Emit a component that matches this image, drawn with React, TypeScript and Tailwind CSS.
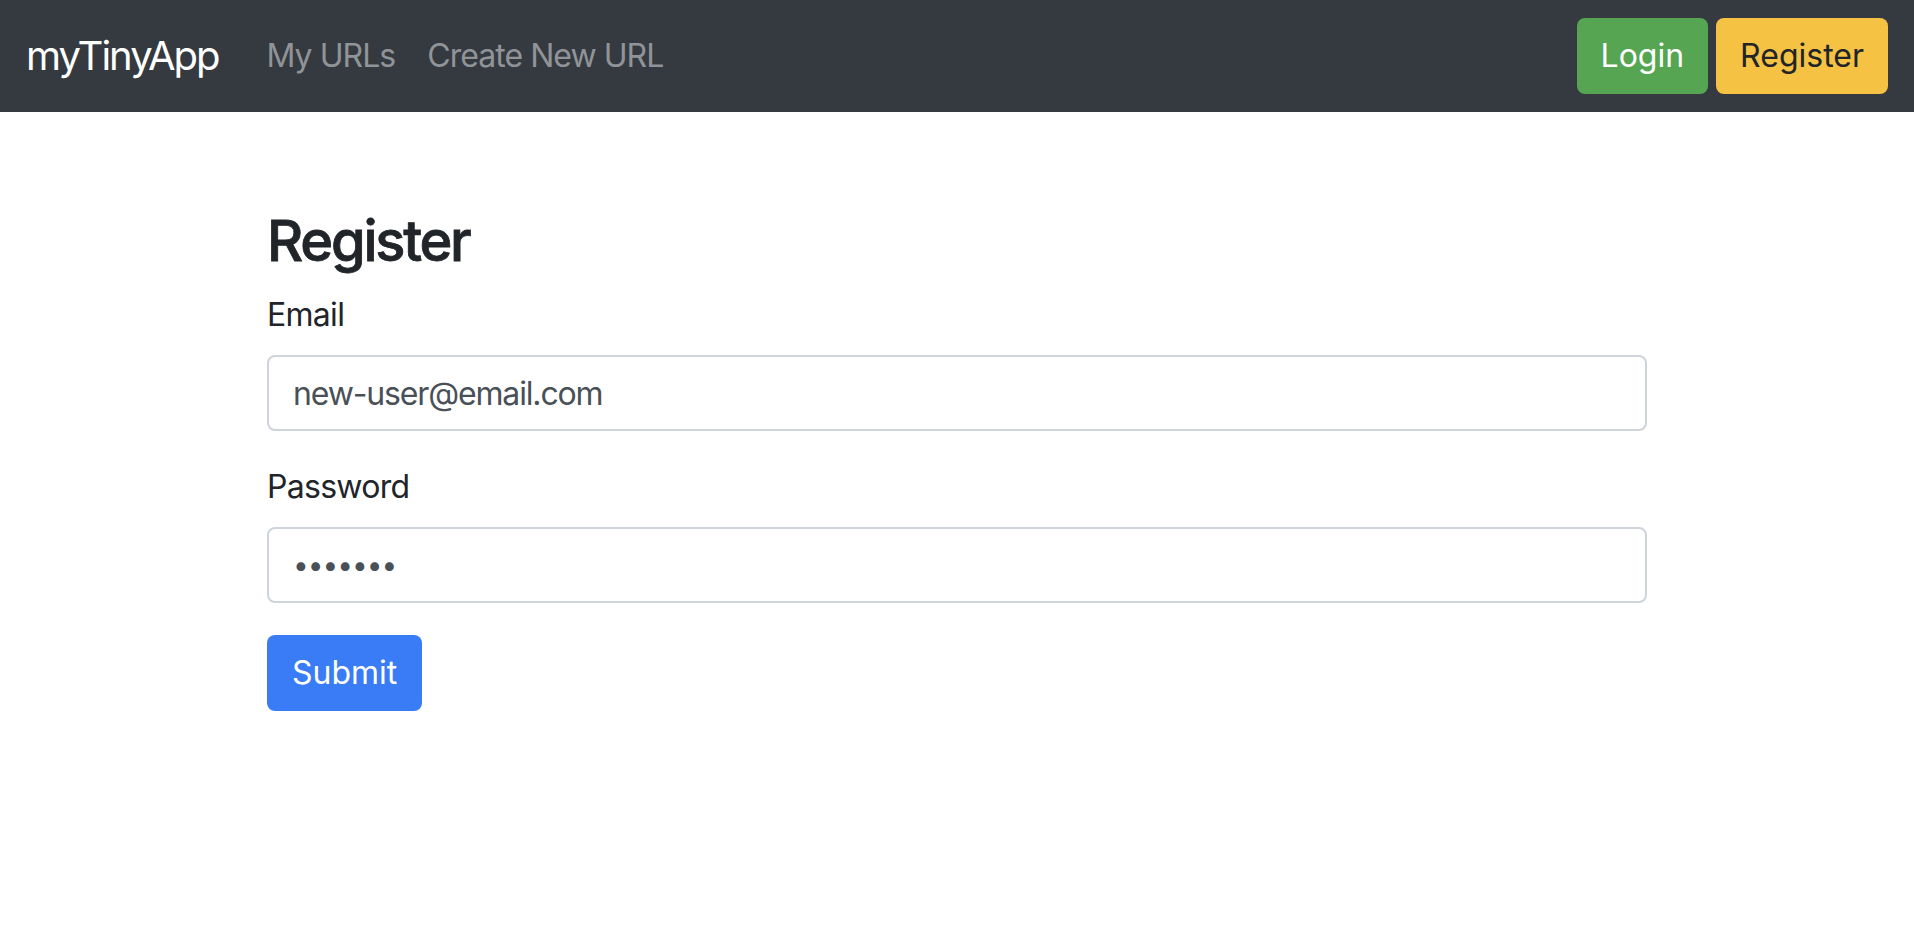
import React, { useState } from 'react';

const font = { fontFamily: 'Inter, "Noto Sans", sans-serif' };

const NavBar: React.FC = () => {
    return (
        <nav className="flex h-[112px] items-center justify-between bg-[#343a40] px-[26px]">
            <div className="flex items-center">
                <a href="#" className="mr-[32px] text-[40px] leading-[60px] tracking-[-0.05em] text-white">
                    myTinyApp
                </a>
                <a href="#" className="px-[16px] text-[32px] leading-[48px] tracking-[-0.03em] text-[#909498]">
                    My URLs
                </a>
                <a href="#" className="px-[16px] text-[32px] leading-[48px] tracking-[-0.03em] text-[#909498]">
                    Create New URL
                </a>
            </div>
            <div className="flex items-center gap-[8px] tracking-normal">
                <button className="h-[76px] rounded-[8px] bg-[#56a552] px-[24px] text-[32px] text-white">
                    Login
                </button>
                <button className="h-[76px] rounded-[8px] bg-[#f5c243] px-[24px] text-[32px] text-[#212529]">
                    Register
                </button>
            </div>
        </nav>
    );
};

const App: React.FC = () => {
    const [email, setEmail] = useState('new-user@email.com');
    const [password, setPassword] = useState('1234567');

    return (
        <div className="min-h-screen bg-white tracking-[-0.044em] text-[#212529]" style={font}>
            <NavBar />
            <main className="mx-auto mt-[96px] w-[1380px]">
                <h3 className="mb-[16px] text-[56px] font-medium leading-[67px] tracking-[-0.04em] [-webkit-text-stroke:0.8px_#212529]">Register</h3>
                <form onSubmit={(e) => e.preventDefault()}>
                    <div className="mb-[32px]">
                        <label className="mb-[16px] block text-[32px] leading-[48px]">Email</label>
                        <input
                            type="email"
                            value={email}
                            onChange={(e) => setEmail(e.target.value)}
                            className="block h-[76px] w-full rounded-[8px] border-2 border-[#ced4da] px-[24px] text-[32px] tracking-[-0.036em] text-[#495057] outline-none"
                        />
                    </div>
                    <div className="mb-[32px]">
                        <label className="mb-[16px] block text-[32px] leading-[48px]">Password</label>
                        <input
                            type="password"
                            value={password}
                            onChange={(e) => setPassword(e.target.value)}
                            className="block h-[76px] w-full rounded-[8px] border-2 border-[#ced4da] px-[24px] text-[28px] tracking-[-1px] text-[#495057] outline-none"
                        />
                    </div>
                    <button type="submit" className="h-[76px] rounded-[8px] bg-[#3a7cf6] px-[25px] text-[32px] tracking-normal text-white">
                        Submit
                    </button>
                </form>
            </main>
        </div>
    );
};

export default App;
